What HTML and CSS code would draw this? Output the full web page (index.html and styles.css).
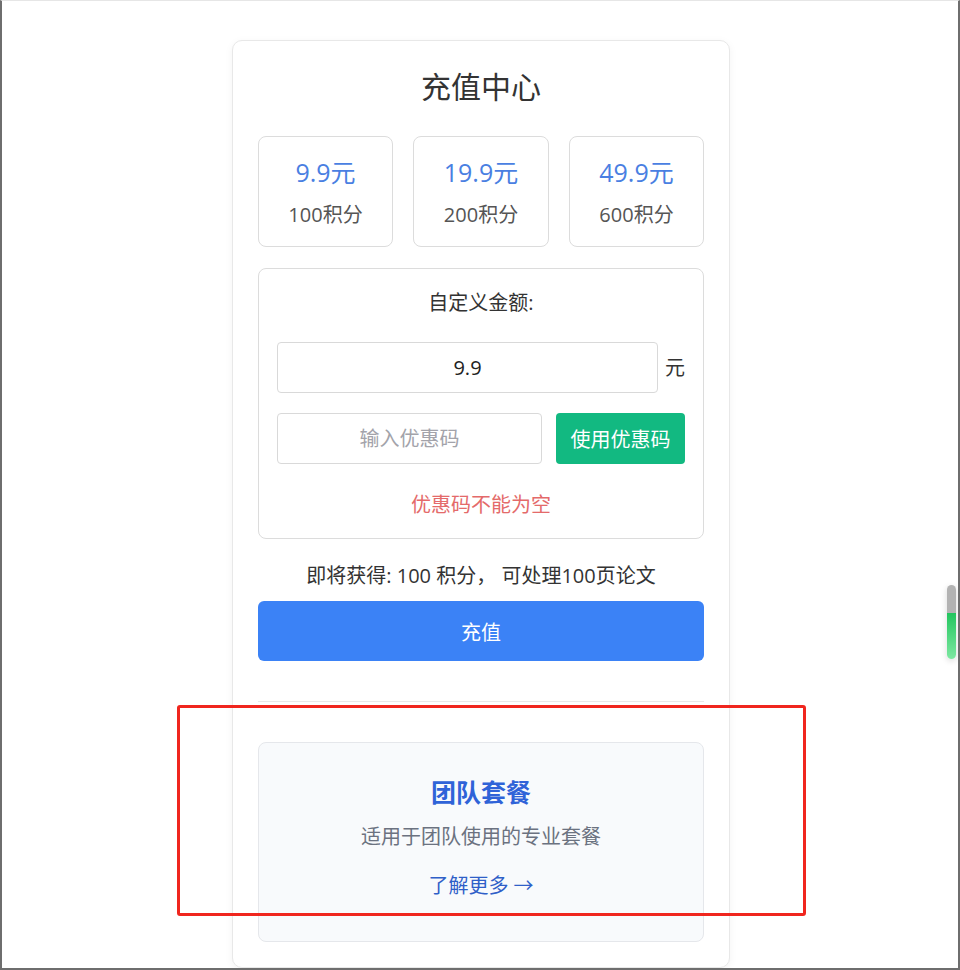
FILE: index.html
```html
<!DOCTYPE html>
<html lang="zh-CN">
<head>
<meta charset="utf-8">
<title>充值中心</title>
<link rel="stylesheet" href="styles.css">
</head>
<body>
<div class="frame">
  <div class="card">
    <h1 class="title">充值中心</h1>
    <div class="packages">
      <div class="pkg"><div class="pkg-price">9.9元</div><div class="pkg-points">100积分</div></div>
      <div class="pkg"><div class="pkg-price">19.9元</div><div class="pkg-points">200积分</div></div>
      <div class="pkg"><div class="pkg-price">49.9元</div><div class="pkg-points">600积分</div></div>
    </div>
    <div class="custom">
      <div class="custom-label">自定义金额:</div>
      <div class="amount-row">
        <input class="field amount" type="text" value="9.9">
        <span class="unit">元</span>
      </div>
      <div class="coupon-row">
        <input class="field coupon" type="text" placeholder="输入优惠码">
        <button class="coupon-btn">使用优惠码</button>
      </div>
      <div class="error">优惠码不能为空</div>
    </div>
    <div class="summary">即将获得: 100 积分， 可处理100页论文</div>
    <button class="pay-btn">充值</button>
    <div class="divider"></div>
    <div class="team">
      <div class="team-title">团队套餐</div>
      <div class="team-desc">适用于团队使用的专业套餐</div>
      <div class="team-link">了解更多 →</div>
    </div>
  </div>
  <div class="annotation"></div>
  <div class="scroll-pill"><div class="pill-top"></div><div class="pill-bottom"></div></div>
</div>
</body>
</html>
```
FILE: styles.css
```css
* { box-sizing: border-box; }
html, body { margin: 0; padding: 0; overflow: hidden; }
body {
  font-family: "Open Sans", "Noto Sans CJK SC", sans-serif;
  background: #ffffff;
  color: #333;
}
.frame {
  position: relative;
  width: 960px;
  height: 970px;
  overflow: hidden;
  border-top: 1px solid #e6e6e6;
  border-left: 2px solid #6e6e6e;
  border-right: 2px solid #6e6e6e;
  border-bottom: 2px solid #6e6e6e;
  padding-top: 39px;
}
.card {
  width: 498px;
  margin-left: 230px;
  background: #fff;
  border: 1px solid #e8e8e8;
  border-radius: 10px;
  box-shadow: 0 2px 8px rgba(0,0,0,0.05);
  padding: 25px 25px 25px 25px;
}
.title {
  margin: 0 0 28px;
  font-size: 30px;
  font-weight: 400;
  line-height: 42px;
  text-align: center;
  color: #333;
}
.packages {
  display: grid;
  grid-template-columns: 135px 136px 135px;
  justify-content: space-between;
}
.pkg {
  border: 1px solid #dcdcdc;
  border-radius: 8px;
  padding: 17px 4px 18px;
  text-align: center;
}
.pkg-price {
  font-size: 25px;
  line-height: 36px;
  color: #4a7fe2;
}
.pkg-points {
  margin-top: 11px;
  font-size: 20px;
  line-height: 27px;
  color: #555;
}
.custom {
  margin-top: 21px;
  border: 1px solid #dcdcdc;
  border-radius: 8px;
  padding: 20px 18px 20px;
}
.custom-label {
  font-size: 20px;
  line-height: 27px;
  text-align: center;
  color: #333;
}
.amount-row {
  margin-top: 26px;
  display: flex;
  align-items: center;
  gap: 7px;
}
.field {
  height: 51px;
  border: 1px solid #d9d9d9;
  border-radius: 4px;
  font-family: "Open Sans", "Noto Sans CJK SC", sans-serif;
  font-size: 20px;
  text-align: center;
  color: #222;
  background: #fff;
  outline: none;
  padding: 0 8px;
}
.field::placeholder { color: #a3a3aa; }
.amount { flex: 1; min-width: 0; }
.unit {
  font-size: 20px;
  line-height: 27px;
  color: #333;
  width: 20px;
}
.coupon-row {
  margin-top: 20px;
  display: flex;
  gap: 14px;
}
.coupon { width: 265px; }
.coupon-btn {
  width: 130px;
  height: 51px;
  border: none;
  border-radius: 4px;
  background: #12b981;
  color: #fff;
  font-family: "Open Sans", "Noto Sans CJK SC", sans-serif;
  font-size: 20px;
  padding: 0;
}
.error {
  margin-top: 27px;
  font-size: 20px;
  line-height: 27px;
  text-align: center;
  color: #e46a6a;
}
.summary {
  margin-top: 23px;
  font-size: 20px;
  line-height: 27px;
  text-align: center;
  color: #333;
}
.pay-btn {
  display: block;
  width: 100%;
  height: 60px;
  margin-top: 12px;
  border: none;
  border-radius: 6px;
  background: #3b82f6;
  color: #fff;
  font-family: "Open Sans", "Noto Sans CJK SC", sans-serif;
  font-size: 20px;
}
.divider {
  margin-top: 40px;
  height: 1px;
  background: #e8e8e8;
}
.team {
  margin-top: 40px;
  background: #f8fafc;
  border: 1px solid #e5e7eb;
  border-radius: 8px;
  padding: 31px 20px 42px;
  text-align: center;
}
.team-title {
  font-size: 25px;
  font-weight: 700;
  line-height: 36px;
  color: #2f63d8;
}
.team-desc {
  margin-top: 13px;
  font-size: 20px;
  line-height: 27px;
  color: #6b7280;
}
.team-link {
  margin-top: 22px;
  font-size: 20px;
  line-height: 27px;
  color: #2f5fc8;
}
.annotation {
  position: absolute;
  left: 175px;
  top: 704px;
  width: 629px;
  height: 211px;
  border: 3px solid #f0261e;
  border-radius: 3px;
}
.scroll-pill {
  position: absolute;
  left: 945px;
  top: 584px;
  width: 9px;
  height: 74px;
  border-radius: 5px;
  overflow: hidden;
  box-shadow: 0 2px 6px rgba(0,0,0,0.15);
  display: flex;
  flex-direction: column;
}
.pill-top { height: 28px; background: #b3b3b3; }
.pill-bottom { flex: 1; background: linear-gradient(#22c55e, #7ee8a2); }
```
